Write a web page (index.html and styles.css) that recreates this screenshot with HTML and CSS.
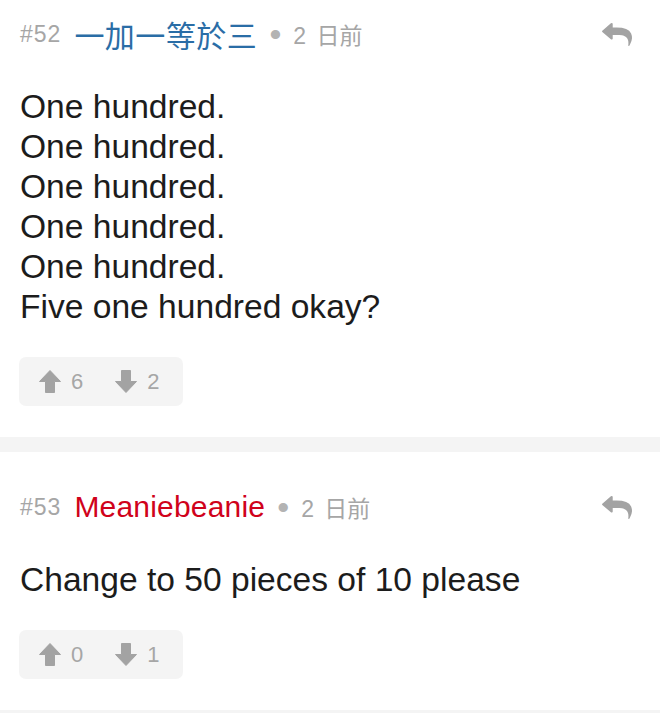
FILE: index.html
```html
<!DOCTYPE html>
<html lang="zh-Hant">
<head>
<meta charset="utf-8">
<title>Comments</title>
<link rel="stylesheet" href="styles.css">
</head>
<body>
<div class="list">
  <article class="comment comment--first">
    <header class="comment-head">
      <span class="comment-no">#52</span>
      <span class="comment-author author--blue">一加一等於三</span>
      <span class="comment-meta"><span class="dot">•</span><span class="when">2 日前</span></span>
      <span class="reply" aria-label="reply">
        <svg width="30" height="23" viewBox="0 64 1792 1600" preserveAspectRatio="none"><path fill="#a3a3a3" d="M1792 1120q0 166-127 451-3 7-10.5 24t-13.5 30-13 22q-12 17-28 17-15 0-23.5-10t-8.5-25q0-9 2.5-26.5t2.5-23.5q5-68 5-123 0-101-17.5-181t-48.5-138.5-80-101-105.5-69.5-133-42.5-154-21.5-175.5-6h-224v256q0 26-19 45t-45 19-45-19l-512-512q-19-19-19-45t19-45l512-512q19-19 45-19t45 19 19 45v256h224q713 0 875 403 53 134 53 333z"/></svg>
      </span>
    </header>
    <div class="comment-body">
      <p>One hundred.<br>One hundred.<br>One hundred.<br>One hundred.<br>One hundred.<br>Five one hundred okay?</p>
    </div>
    <div class="votes">
      <span class="vote">
        <svg width="22" height="23" viewBox="0 0 22 23"><path fill="#a3a3a3" d="M11 0.5 L21.5 11.5 L15.5 11.5 L15.5 22.5 L6.5 22.5 L6.5 11.5 L0.5 11.5 Z" stroke="#a3a3a3" stroke-width="1" stroke-linejoin="round"/></svg>
        <span class="vote-count">6</span>
      </span>
      <span class="vote">
        <svg width="22" height="23" viewBox="0 0 22 23"><path fill="#a3a3a3" d="M11 22.5 L21.5 11.5 L15.5 11.5 L15.5 0.5 L6.5 0.5 L6.5 11.5 L0.5 11.5 Z" stroke="#a3a3a3" stroke-width="1" stroke-linejoin="round"/></svg>
        <span class="vote-count">2</span>
      </span>
    </div>
  </article>
  <article class="comment">
    <header class="comment-head">
      <span class="comment-no">#53</span>
      <span class="comment-author author--red">Meaniebeanie</span>
      <span class="comment-meta"><span class="dot">•</span><span class="when">2 日前</span></span>
      <span class="reply" aria-label="reply">
        <svg width="30" height="23" viewBox="0 64 1792 1600" preserveAspectRatio="none"><path fill="#a3a3a3" d="M1792 1120q0 166-127 451-3 7-10.5 24t-13.5 30-13 22q-12 17-28 17-15 0-23.5-10t-8.5-25q0-9 2.5-26.5t2.5-23.5q5-68 5-123 0-101-17.5-181t-48.5-138.5-80-101-105.5-69.5-133-42.5-154-21.5-175.5-6h-224v256q0 26-19 45t-45 19-45-19l-512-512q-19-19-19-45t19-45l512-512q19-19 45-19t45 19 19 45v256h224q713 0 875 403 53 134 53 333z"/></svg>
      </span>
    </header>
    <div class="comment-body">
      <p>Change to 50 pieces of 10 please</p>
    </div>
    <div class="votes">
      <span class="vote">
        <svg width="22" height="23" viewBox="0 0 22 23"><path fill="#a3a3a3" d="M11 0.5 L21.5 11.5 L15.5 11.5 L15.5 22.5 L6.5 22.5 L6.5 11.5 L0.5 11.5 Z" stroke="#a3a3a3" stroke-width="1" stroke-linejoin="round"/></svg>
        <span class="vote-count">0</span>
      </span>
      <span class="vote">
        <svg width="22" height="23" viewBox="0 0 22 23"><path fill="#a3a3a3" d="M11 22.5 L21.5 11.5 L15.5 11.5 L15.5 0.5 L6.5 0.5 L6.5 11.5 L0.5 11.5 Z" stroke="#a3a3a3" stroke-width="1" stroke-linejoin="round"/></svg>
        <span class="vote-count">1</span>
      </span>
    </div>
  </article>
  <div class="comment comment--stub"></div>
</div>
</body>
</html>
```
FILE: styles.css
```css
html, body {
  margin: 0;
  padding: 0;
  background: #ffffff;
}

body {
  font-family: "Liberation Sans", "Noto Sans CJK TC", Arial, sans-serif;
  color: #1c1c1c;
  overflow: hidden;
}

.list {
  display: flex;
  flex-direction: column;
}

.comment {
  display: flex;
  flex-direction: column;
  border-top: 15px solid #f4f4f4;
  padding: 35px 0 31px 0;
}

.comment--first {
  border-top: 0;
  padding-top: 14px;
}

.comment--stub {
  padding: 0;
  height: 40px;
}

.comment-head {
  display: flex;
  align-items: center;
  height: 40px;
  padding: 0 28px 0 20px;
  white-space: nowrap;
}

.comment-no {
  font-size: 23px;
  letter-spacing: 1px;
  color: #a6a6a6;
  margin-right: 13px;
}

.comment-author {
  font-size: 30px;
  line-height: 40px;
}

.author--blue {
  color: #2a6da6;
  font-family: "Noto Sans CJK TC", "Liberation Sans", sans-serif;
  letter-spacing: 0.5px;
}

.author--red {
  color: #d0021b;
  letter-spacing: 0.2px;
}

.comment-meta {
  display: flex;
  align-items: center;
  gap: 12px;
  font-size: 23px;
  color: #a6a6a6;
  margin-left: 12px;
}

.dot {
  font-size: 34px;
  line-height: 40px;
  color: #b3b3b3;
}

.when {
  word-spacing: 4px;
}

.reply {
  margin-left: auto;
  display: flex;
  align-items: center;
}

.comment-body {
  margin-top: 33px;
  padding: 0 20px;
}

.comment-body p {
  margin: 0;
  font-size: 33.6px;
  line-height: 40px;
}

.votes {
  margin: 30px 0 0 19px;
  display: inline-flex;
  align-items: center;
  align-self: flex-start;
  gap: 32px;
  height: 49px;
  padding: 0 23px 0 20px;
  background: #f4f4f4;
  border-radius: 7px;
}

.vote {
  display: inline-flex;
  align-items: center;
  gap: 10px;
}

.vote-count {
  font-size: 22px;
  color: #a6a6a6;
}
```
